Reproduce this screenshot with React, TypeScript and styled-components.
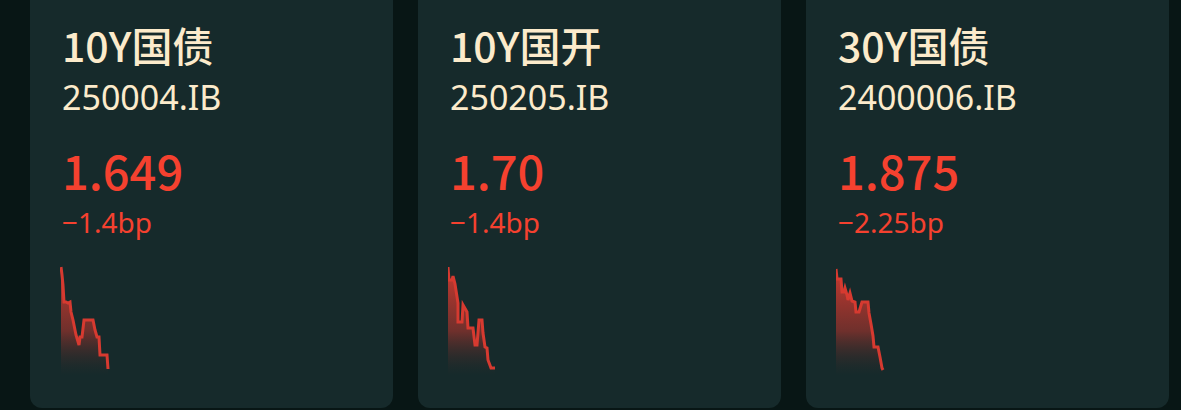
import React from "react";
import styled, { createGlobalStyle } from "styled-components";

const GlobalStyle = createGlobalStyle`
  html, body {
    margin: 0;
    padding: 0;
    background: #081615;
  }
  body {
    font-family: "Noto Sans", "Noto Sans CJK SC", sans-serif;
    overflow: hidden;
  }
`;

const Page = styled.div`
  width: 1181px;
  height: 410px;
  box-sizing: border-box;
  padding-left: 30px;
  display: flex;
  gap: 25px;
  align-items: flex-start;
  overflow: hidden;
`;

const Card = styled.div`
  width: 363px;
  height: 428px;
  margin-top: -20px;
  box-sizing: border-box;
  padding: 40px 32px 0;
  border-radius: 12px;
  background: #162a2b;
  display: flex;
  flex-direction: column;
  align-items: flex-start;
`;

const Title = styled.div`
  font-family: "Noto Sans CJK SC", "Noto Sans", sans-serif;
  font-size: 41px;
  line-height: 48px;
  font-weight: 500;
  color: #fcebcb;
`;

const Code = styled.div`
  margin-top: 9px;
  font-size: 34px;
  line-height: 40px;
  font-weight: 400;
  color: #fcebcb;
`;

const Price = styled.div`
  margin-top: 25px;
  font-family: "Noto Sans CJK SC", "Noto Sans", sans-serif;
  font-size: 47px;
  line-height: 56px;
  font-weight: 500;
  color: #f5412f;
`;

const Change = styled.div`
  margin-top: 8px;
  font-size: 28px;
  line-height: 32px;
  font-weight: 400;
  color: #f5412f;
`;

const Spark = styled.svg`
  display: block;
  margin-top: 26px;
  margin-left: -2px;
`;

type Pt = [number, number];

interface Bond {
  name: string;
  code: string;
  price: string;
  change: string;
  points: Pt[];
}

const bonds: Bond[] = [
  {
    name: "10Y国债",
    code: "250004.IB",
    price: "1.649",
    change: "−1.4bp",
    points: [
      [1, 3], [2, 11], [3, 21], [4, 38], [6, 38], [8, 39], [10, 38], [11, 48],
      [13, 56], [16, 71], [19, 81], [20, 73], [22, 73], [24, 56], [33, 56],
      [35, 66], [37, 73], [39, 73], [40, 91], [47, 91], [48, 105],
    ],
  },
  {
    name: "10Y国开",
    code: "250205.IB",
    price: "1.70",
    change: "−1.4bp",
    points: [
      [0, 3], [1, 16], [4, 16], [5, 12], [7, 20], [10, 39], [10, 58], [14, 58],
      [15, 41], [19, 48], [20, 64], [25, 64], [27, 81], [29, 81], [31, 56],
      [34, 56], [35, 69], [37, 83], [39, 84], [40, 96], [43, 104], [47, 104],
    ],
  },
  {
    name: "30Y国债",
    code: "2400006.IB",
    price: "1.875",
    change: "−2.25bp",
    points: [
      [0, 5], [1, 15], [5, 15], [6, 28], [8, 28], [9, 24], [11, 31], [12, 36],
      [14, 29], [16, 37], [19, 38], [20, 48], [23, 48], [26, 38], [32, 38],
      [33, 49], [35, 60], [37, 72], [38, 83], [42, 83], [44, 93], [46, 104],
      [47, 106],
    ],
  },
];

const Sparkline: React.FC<{ id: string; points: Pt[] }> = ({ id, points }) => {
  const line = points.map(([x, y]) => `${x},${y}`).join(" ");
  const first = points[0];
  const last = points[points.length - 1];
  const area = `${first[0]},112 ${line} ${last[0]},112`;
  return (
    <Spark width="60" height="114" viewBox="0 0 60 114">
      <defs>
        <linearGradient id={id} x1="0" y1="0" x2="0" y2="112" gradientUnits="userSpaceOnUse">
          <stop offset="0" stopColor="#dc3b30" stopOpacity="0.95" />
          <stop offset="0.6" stopColor="#b8352d" stopOpacity="0.55" />
          <stop offset="1" stopColor="#3a2a28" stopOpacity="0" />
        </linearGradient>
      </defs>
      <polygon points={area} fill={`url(#${id})`} />
      <polyline points={line} fill="none" stroke="#d63a30" strokeWidth="3" strokeLinejoin="miter" />
    </Spark>
  );
};

const App: React.FC = () => (
  <>
    <GlobalStyle />
    <Page>
      {bonds.map((b, i) => (
        <Card key={b.code}>
          <Title>{b.name}</Title>
          <Code>{b.code}</Code>
          <Price>{b.price}</Price>
          <Change>{b.change}</Change>
          <Sparkline id={`spark-${i}`} points={b.points} />
        </Card>
      ))}
    </Page>
  </>
);

export default App;
